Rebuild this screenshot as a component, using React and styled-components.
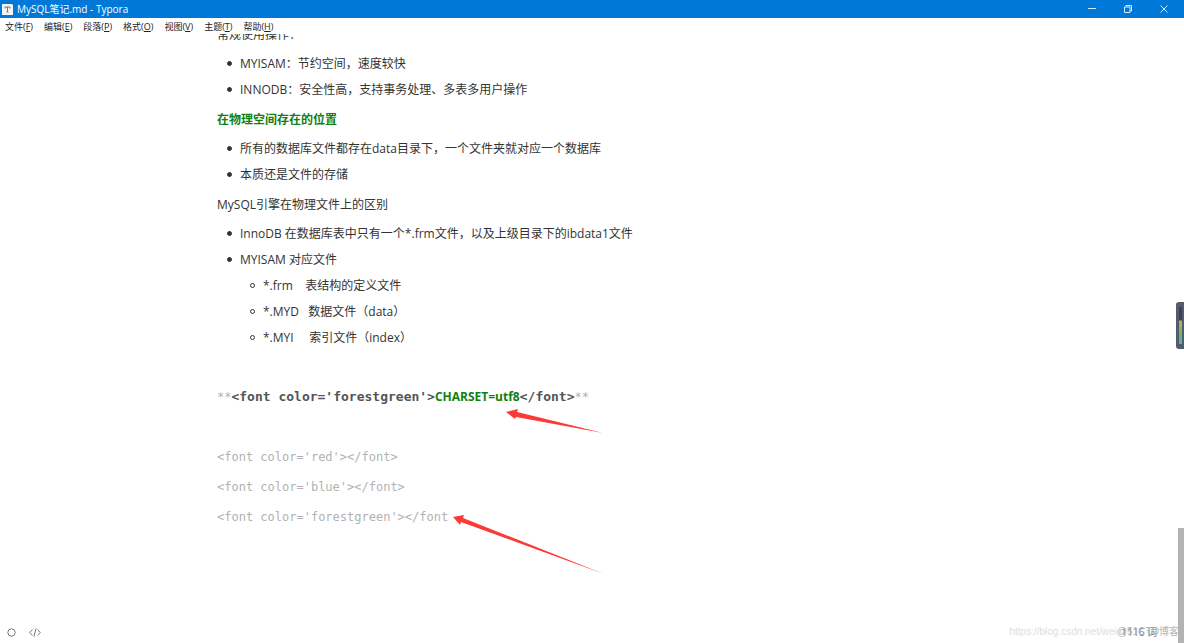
import styled, { createGlobalStyle } from "styled-components";

const GlobalStyle = createGlobalStyle`
  *,
  *::before {
    box-sizing: border-box;
  }

  body {
    margin: 0;
    background-color: #fff;
    font-family: "Open Sans", "Noto Sans CJK SC", sans-serif;
  }
`;

const Window = styled.div`
  position: relative;
  display: flex;
  flex-direction: column;
  height: 100vh;
  overflow: hidden;
`;

const TitleBar = styled.header`
  display: flex;
  align-items: center;
  gap: 4px;
  height: 18px;
  flex-shrink: 0;
  padding-left: 2px;
  background-color: #0078d7;
  color: #fff;
`;

const WindowTitle = styled.h1`
  flex: 1;
  margin: 0;
  font-size: 10px;
  font-weight: 400;
  line-height: 18px;
`;

const WindowBtn = styled.button`
  display: flex;
  align-items: center;
  justify-content: center;
  width: 36px;
  height: 18px;
  padding: 0;
  border: none;
  background: none;
  color: #d9ebf9;
`;

const WindowBtns = styled.div`
  display: flex;
  padding-right: 2px;
`;

const MenuBar = styled.nav`
  display: flex;
  gap: 11px;
  height: 16px;
  flex-shrink: 0;
  padding-left: 5px;
`;

const MenuBtn = styled.button`
  padding: 0;
  border: none;
  background: none;
  font-family: inherit;
  font-size: 9px;
  line-height: 18px;
  height: 18px;
  white-space: nowrap;
  color: #222;
`;

const Editor = styled.main`
  flex: 1;
  min-height: 0;
  overflow: hidden;
  padding: 0 24px;
`;

// scrolled down, so the first paragraph is half under the menu bar
const Article = styled.article`
  max-width: 750px;
  margin: -9px auto 0;
  font-size: 12px;
  line-height: 20px;
  color: #333;
`;

const Paragraph = styled.p`
  min-height: 20px;
  margin: 0 0 9px;
  font-weight: ${({ $strong }) => ($strong ? 700 : 400)};
  color: ${({ $strong }) => ($strong ? "#118011" : "inherit")};
`;

const List = styled.ul`
  display: flex;
  flex-direction: column;
  gap: 6px;
  margin: 0 0 10px;
  padding-left: 23px;
  list-style: none;
`;

const NestedList = styled(List)`
  margin: 6px 0 0;
`;

const Item = styled.li`
  white-space: pre-wrap;

  &::before {
    content: "";
    display: inline-block;
    width: 5px;
    height: 5px;
    margin: 0 8px 2px -13px;
    vertical-align: middle;
    border: 1px solid #333;
    border-radius: 50%;
    background-color: ${({ $hollow }) => ($hollow ? "#fff" : "#333")};
  }
`;

const SourceLine = styled.p`
  position: relative;
  min-height: 20px;
  margin: 0 0 10px;
  font-family: "DejaVu Sans Mono", monospace;
  color: #b2b2b2;
`;

const Tag = styled.strong`
  font-size: 13px;
  color: #555;
`;

const Charset = styled.strong`
  font-family: "Open Sans", sans-serif;
  color: #118011;
`;

const Arrow = styled.svg`
  position: absolute;
  top: ${({ $top }) => $top}px;
  left: ${({ $left }) => $left}px;
  fill: #fb3a36;
`;

const StatusBar = styled.footer`
  display: flex;
  align-items: center;
  gap: 13px;
  height: 22px;
  flex-shrink: 0;
  padding: 0 27px 0 7px;
`;

const StatusBtn = styled.button`
  display: flex;
  padding: 0;
  border: none;
  background: none;
  color: #777;
`;

const WordCount = styled.span`
  margin-left: auto;
  font-size: 10px;
  line-height: 22px;
  color: #777;
`;

const Watermark = styled.div`
  position: absolute;
  right: 5px;
  bottom: 4px;
  display: flex;
  font-family: "Liberation Sans", "Noto Sans CJK SC", sans-serif;
  font-size: 10px;
  line-height: 14px;
  color: #dedede;
`;

const WatermarkOwner = styled.span`
  color: #b4b4b4;
`;

const ScrollThumb = styled.div`
  position: absolute;
  right: 0;
  bottom: 0;
  width: 6px;
  height: 115px;
  background-color: #b3b3b3;
`;

const Meter = styled.div`
  position: absolute;
  right: 0;
  top: 302px;
  width: 8px;
  height: 47px;
  padding: 5px 2px 5px 3px;
  border-radius: 3px 0 0 3px;
  background-color: #555b6b;
`;

const MeterFill = styled.div`
  height: 37px;
  background: linear-gradient(#3d4354 13px, #b5b157 14px, #6fb376 26px, #45b5a5);
`;

const menus = [
  ["文件", "F"],
  ["编辑", "E"],
  ["段落", "P"],
  ["格式", "O"],
  ["视图", "V"],
  ["主题", "T"],
  ["帮助", "H"],
];

function App() {
  return (
    <Window>
      <GlobalStyle />
      <TitleBar>
        <svg width="11" height="12" viewBox="0 0 11 12">
          <path d="M0 1h10l1 1v10H0z" fill="#f3f3f3" />
          <path d="M3 4h5v1.5M3 4v1.5M5.5 4v5M4.5 9h2" stroke="#777" fill="none" />
        </svg>
        <WindowTitle>MySQL笔记.md - Typora</WindowTitle>
        <WindowBtns>
          <WindowBtn aria-label="最小化">
            <svg width="8" height="8" viewBox="0 0 8 8" stroke="currentColor">
              <path d="M0 3.5h8" />
            </svg>
          </WindowBtn>
          <WindowBtn aria-label="还原">
            <svg width="8" height="8" viewBox="0 0 8 8" fill="none" stroke="currentColor">
              <path d="M.5 2h5.500v5.500H.5zM2 2V.5h5.500V6H6" />
            </svg>
          </WindowBtn>
          <WindowBtn aria-label="关闭">
            <svg width="8" height="8" viewBox="0 0 8 8" stroke="currentColor">
              <path d="M.5.5l7 7M7.500.5l-7 7" />
            </svg>
          </WindowBtn>
        </WindowBtns>
      </TitleBar>

      <MenuBar>
        {menus.map(([name, key]) => (
          <MenuBtn key={key}>
            {name}(<u>{key}</u>)
          </MenuBtn>
        ))}
      </MenuBar>

      <Editor>
        <Article>
          <Paragraph>常规使用操作：</Paragraph>
          <List>
            <Item>MYISAM：节约空间，速度较快</Item>
            <Item>INNODB：安全性高，支持事务处理、多表多用户操作</Item>
          </List>
          <Paragraph $strong>在物理空间存在的位置</Paragraph>
          <List>
            <Item>所有的数据库文件都存在data目录下，一个文件夹就对应一个数据库</Item>
            <Item>本质还是文件的存储</Item>
          </List>
          <Paragraph>MySQL引擎在物理文件上的区别</Paragraph>
          <List>
            <Item>InnoDB 在数据库表中只有一个*.frm文件，以及上级目录下的ibdata1文件</Item>
            <Item>
              MYISAM 对应文件
              <NestedList>
                <Item $hollow>{"*.frm    表结构的定义文件"}</Item>
                <Item $hollow>{"*.MYD   数据文件（data）"}</Item>
                <Item $hollow>{"*.MYI     索引文件（index）"}</Item>
              </NestedList>
            </Item>
          </List>

          <Paragraph />
          <SourceLine>
            **<Tag>{"<font color='forestgreen'>"}</Tag>
            <Charset>CHARSET=utf8</Charset>
            <Tag>{"</font>"}</Tag>**
            <Arrow $top={22} $left={289} width="98" height="24" viewBox="0 0 98 24">
              <path d="M0 3L12 0l-1 3L97 24 10 8 9 10z" />
            </Arrow>
          </SourceLine>
          <SourceLine />
          <SourceLine>{"<font color='red'></font>"}</SourceLine>
          <SourceLine>{"<font color='blue'></font>"}</SourceLine>
          <SourceLine>
            {"<font color='forestgreen'></font"}
            <Arrow $top={8} $left={236} width="152" height="60" viewBox="0 0 152 60">
              <path d="M0 2L11 0l-1 3L151 59 8 7 7 10z" />
            </Arrow>
          </SourceLine>
        </Article>
      </Editor>

      <StatusBar>
        <StatusBtn aria-label="侧边栏">
          <svg width="9" height="9" viewBox="0 0 9 9" fill="none" stroke="currentColor">
            <circle cx="4.500" cy="4.500" r="3.700" />
          </svg>
        </StatusBtn>
        <StatusBtn aria-label="源代码模式">
          <svg width="12" height="9" viewBox="0 0 12 9" fill="none" stroke="currentColor">
            <path d="M3.500 1.500L.7 4.500l2.800 3M8.500 1.500l2.800 3-2.800 3M7 .5L5 8.500" />
          </svg>
        </StatusBtn>
        <WordCount>1116 词</WordCount>
      </StatusBar>

      <Watermark>
        <span>https://blog.csdn.net/wei</span>
        <WatermarkOwner>@51CTO博客</WatermarkOwner>
      </Watermark>
      <ScrollThumb />
      <Meter>
        <MeterFill />
      </Meter>
    </Window>
  );
}

export default App;
